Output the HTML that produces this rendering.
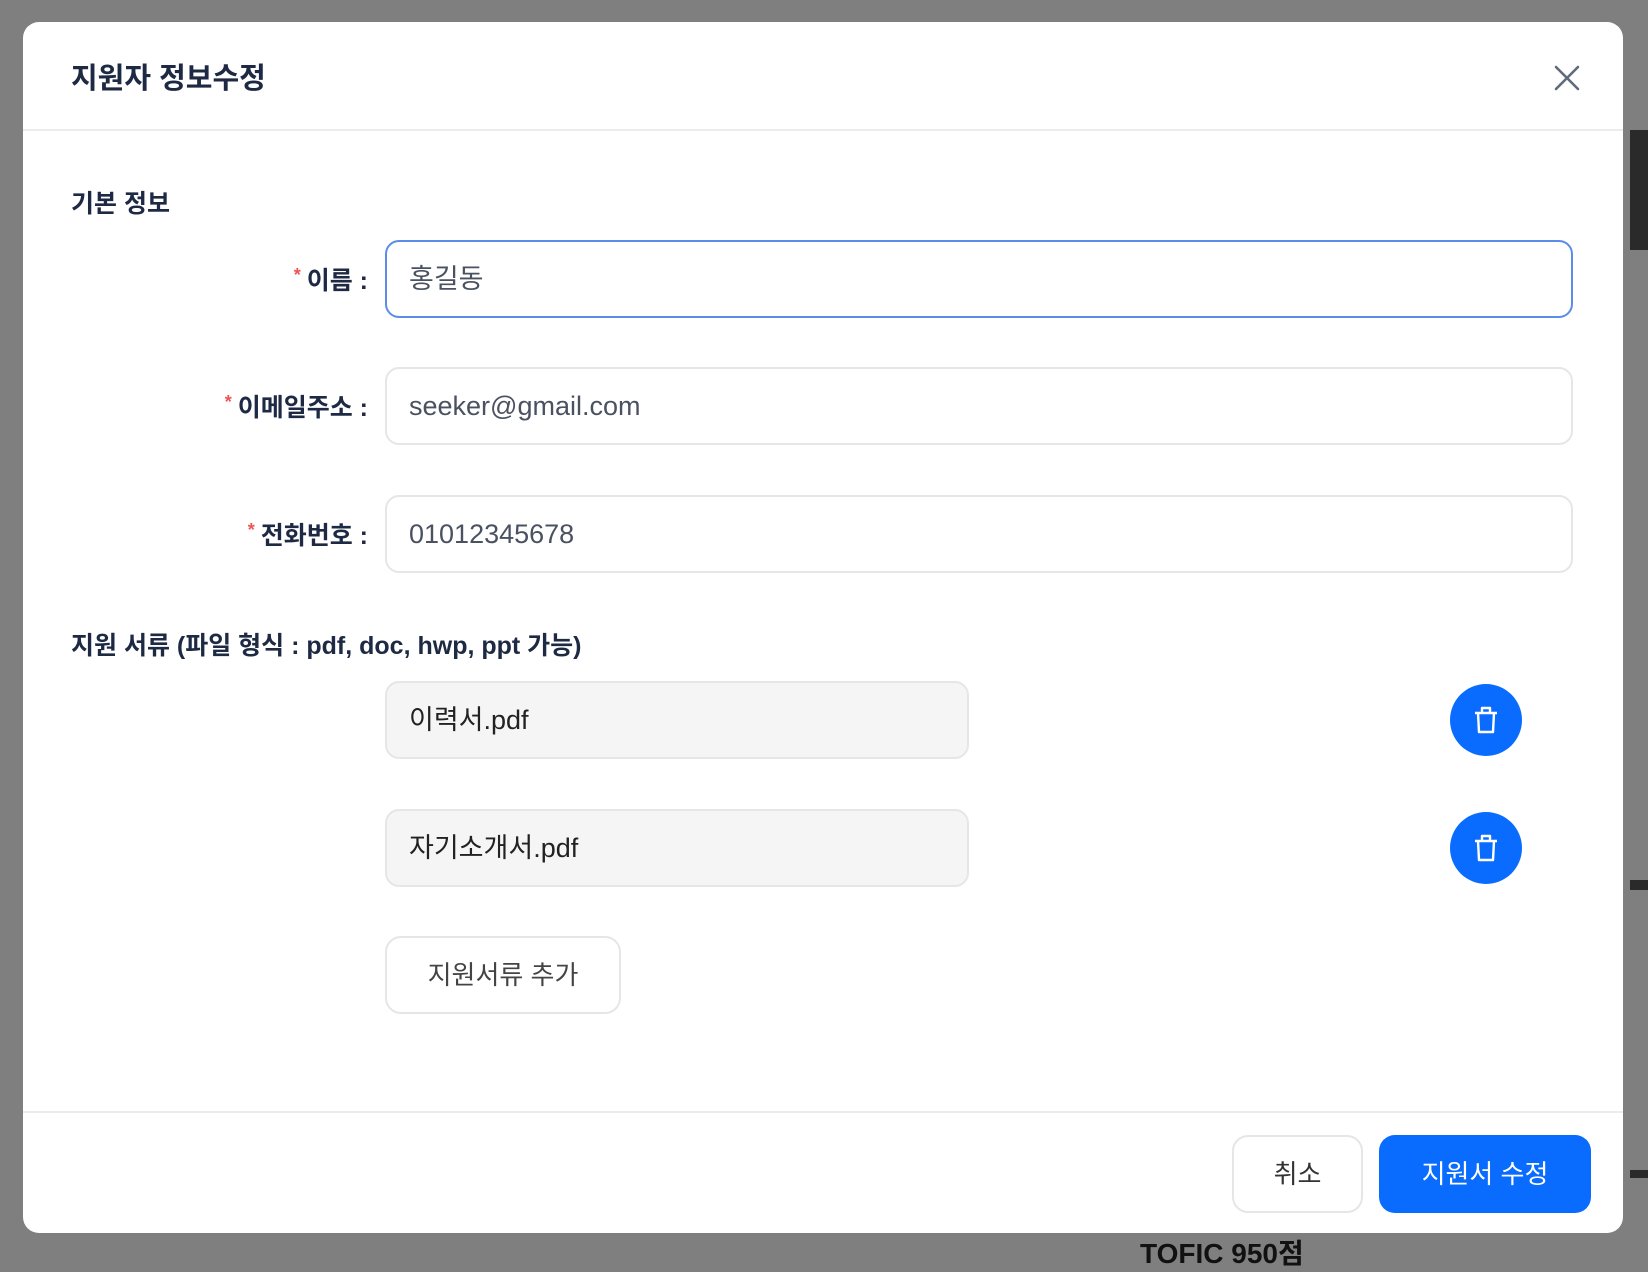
<!DOCTYPE html>
<html><head><meta charset="utf-8"><style>
*{box-sizing:border-box;margin:0;padding:0}
body{width:1648px;height:1258px;background:#7f7f7f;position:relative;overflow:hidden;font-family:"Liberation Sans","Noto Sans CJK KR",sans-serif;color:#1e2a44}
.bgline{position:absolute;background:#2a2a2a}
.modal{position:absolute;left:23px;top:22px;width:1600px;height:1211px;background:#fff;border-radius:16px;overflow:hidden}
.title{position:absolute;left:48px;top:33px;font-size:29px;font-weight:700;color:#1e2a44}
.close{position:absolute;left:1530px;top:42px;width:28px;height:28px}
.hr{position:absolute;left:0;width:100%;height:2px;background:#ececec}
.sec{position:absolute;left:48px;font-size:25px;font-weight:700;color:#1e2a44}
.lab{position:absolute;right:1255px;font-size:25px;font-weight:700;color:#1e2a44;white-space:nowrap}
.lab b{color:#f05252;font-size:18px;vertical-align:8px;margin-right:6px}
.inp{position:absolute;left:362px;width:1188px;height:78px;border:2px solid #e6e6e6;border-radius:14px;font-size:27px;color:#4a5160;padding-left:22px;line-height:74px}
.file{position:absolute;left:362px;width:584px;height:78px;border:2px solid #e6e6e6;background:#f5f5f5;border-radius:14px;font-size:27px;color:#222;padding-left:22px;line-height:74px}
.trash{position:absolute;left:1427px;width:72px;height:72px;border-radius:50%;background:#0a6cff;display:flex;align-items:center;justify-content:center}
.btn{position:absolute;height:78px;border-radius:16px;font-size:26px;text-align:center;line-height:78px}
</style></head><body>
<div class="bgline" style="left:1630px;top:130px;width:18px;height:120px"></div>
<div class="bgline" style="left:1630px;top:880px;width:18px;height:10px"></div>
<div class="bgline" style="left:1630px;top:1170px;width:18px;height:8px"></div>
<div style="position:absolute;left:1140px;top:1232px;font-size:28px;font-weight:700;color:#111">TOFIC 950점</div>
<div class="modal">
 <div class="title">지원자 정보수정</div>
 <svg class="close" viewBox="0 0 28 28"><path d="M3 3L25 25M25 3L3 25" stroke="#5f6b7a" stroke-width="2.6" stroke-linecap="round"/></svg>
 <div class="hr" style="top:107px"></div>
 <div class="sec" style="top:162px">기본 정보</div>
 <div class="lab" style="top:239px"><b>*</b>이름 :</div>
 <div class="inp" style="top:218px;border-color:#5b8de8">홍길동</div>
 <div class="lab" style="top:366px"><b>*</b>이메일주소 :</div>
 <div class="inp" style="top:345px">seeker@gmail.com</div>
 <div class="lab" style="top:494px"><b>*</b>전화번호 :</div>
 <div class="inp" style="top:473px">01012345678</div>
 <div class="sec" style="top:604px">지원 서류 (파일 형식 : pdf, doc, hwp, ppt 가능)</div>
 <div class="file" style="top:659px">이력서.pdf</div>
 <div class="trash" style="top:662px"><svg width="28" height="30" viewBox="0 0 28 30"><path d="M3 8H25M10 8V3H18V8M6 8L7 27H21L22 8" fill="none" stroke="#fff" stroke-width="2.4" stroke-linejoin="round"/></svg></div>
 <div class="file" style="top:787px">자기소개서.pdf</div>
 <div class="trash" style="top:790px"><svg width="28" height="30" viewBox="0 0 28 30"><path d="M3 8H25M10 8V3H18V8M6 8L7 27H21L22 8" fill="none" stroke="#fff" stroke-width="2.4" stroke-linejoin="round"/></svg></div>
 <div class="btn" style="left:362px;top:914px;width:236px;border:2px solid #e6e6e6;color:#444;line-height:74px">지원서류 추가</div>
 <div class="hr" style="top:1089px"></div>
 <div class="btn" style="left:1209px;top:1113px;width:131px;border:2px solid #e6e6e6;color:#333;line-height:74px">취소</div>
 <div class="btn" style="left:1356px;top:1113px;width:212px;background:#0a6cff;color:#fff">지원서 수정</div>
</div>
</body></html>
